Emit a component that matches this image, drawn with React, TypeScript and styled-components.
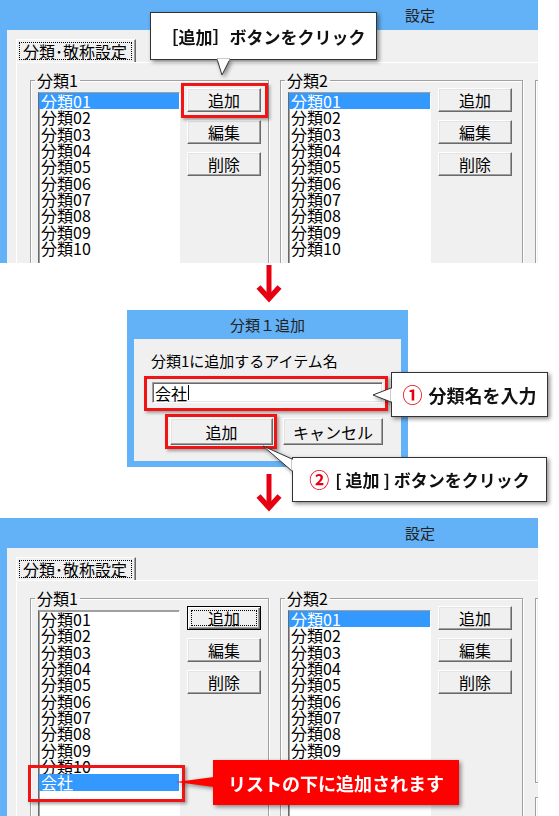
import React from 'react';
import styled, { createGlobalStyle, css } from 'styled-components';

const GlobalStyle = createGlobalStyle`
  html, body {
    margin: 0;
    padding: 0;
    background: #fff;
  }
  body {
    font-family: "Noto Sans CJK JP", "Liberation Sans", sans-serif;
    color: #000;
  }
`;

const Page = styled.div`
  width: 559px;
  height: 816px;
  overflow: hidden;
  display: flex;
  flex-direction: column;
`;

// ---- settings window ----

const Window = styled.div<{ $height: number }>`
  position: relative;
  flex-shrink: 0;
  width: 538px;
  height: ${p => p.$height}px;
  box-sizing: border-box;
  padding-left: 7px;
  background: #63b1f6;
  display: flex;
  flex-direction: column;
  overflow: hidden;
`;

const TitleBar = styled.div`
  height: 30px;
  line-height: 30px;
  padding-left: 398px;
  font-size: 15px;
  color: #222;
  flex-shrink: 0;
`;

const Client = styled.div`
  flex: 1;
  background: #f0f0f0;
  padding: 9px 0 0 9px;
  display: flex;
  flex-direction: column;
`;

const TabStrip = styled.div`
  display: flex;
  height: 23px;
  flex-shrink: 0;
`;

const Tab = styled.div`
  width: 120px;
  height: 23px;
  box-sizing: border-box;
  border-top: 1px solid #fff;
  border-left: 1px solid #fff;
  border-right: 1px solid #696969;
  box-shadow: inset -1px 0 0 #a0a0a0;
  padding: 2px 0 0 2px;
  display: flex;
  align-items: flex-start;
`;

const FocusText = styled.span`
  border: 1px dotted #000;
  padding: 0 4px 0 3px;
  font-size: 16px;
  line-height: 16px;
  white-space: nowrap;
`;

const TabPane = styled.div`
  flex: 1;
  border-top: 1px solid #fff;
  border-left: 1px solid #fff;
  padding: 9px 0 0 13px;
  display: flex;
  align-items: flex-start;
  gap: 11px;
`;

const Group = styled.fieldset<{ $width: number; $height?: number }>`
  flex-shrink: 0;
  margin: 0;
  padding: 0 0 0 7px;
  width: ${p => p.$width}px;
  height: ${p => p.$height ?? 320}px;
  box-sizing: border-box;
  border: 1px solid #a0a0a0;
  box-shadow: inset 1px 1px 0 #fff, 1px 1px 0 #fff;
  display: flex;
  align-items: flex-start;
  gap: 7px;
`;

const Legend = styled.legend`
  padding: 0 2px;
  margin-left: -3px;
  font-size: 16px;
  line-height: 16px;
`;

const SideColumn = styled.div`
  display: flex;
  flex-direction: column;
  gap: 14px;
  margin: 8px 0 0 1px;
`;

const ListBox = styled.div<{ $width: number }>`
  position: relative;
  width: ${p => p.$width}px;
  height: 300px;
  margin-top: 4px;
  box-sizing: border-box;
  background: #fff;
  border: 1px solid;
  border-color: #a0a0a0 #fff #fff #696969;
  box-shadow: inset 1px 1px 0 #a0a0a0;
`;

const ListItem = styled.div<{ $selected?: boolean }>`
  height: 16.33px;
  line-height: 16px;
  padding-left: 2px;
  font-size: 16px;
  white-space: nowrap;
  ${p => p.$selected && css`
    background: #3399ff;
    color: #fff;
  `}
`;

const ButtonColumn = styled.div`
  display: flex;
  flex-direction: column;
  gap: 8px;
`;

const Button = styled.button<{ $width?: number; $height?: number; $default?: boolean }>`
  width: ${p => p.$width ?? 74}px;
  height: ${p => p.$height ?? 24}px;
  box-sizing: border-box;
  margin: 0;
  padding: 0;
  font-family: inherit;
  font-size: 16px;
  color: #000;
  background: #f0f0f0;
  border: 1px solid;
  border-color: #fff #696969 #696969 #fff;
  box-shadow: inset -1px -1px 0 #a0a0a0, inset 1px 1px 0 #e3e3e3;
  display: flex;
  align-items: center;
  justify-content: center;
  ${p => p.$default && css`
    border-color: #000;
    box-shadow: inset 1px 1px 0 #fff, inset -1px -1px 0 #696969, inset -2px -2px 0 #a0a0a0;
  `}
`;

const ButtonFocus = styled.span`
  width: calc(100% - 8px);
  height: calc(100% - 8px);
  border: 1px dotted #000;
  display: flex;
  align-items: center;
  justify-content: center;
  line-height: 16px;
`;

// red frame drawn round whatever it wraps
const Ring = styled.div<{ $inset: string; $mt?: number; $ml?: number }>`
  position: relative;
  display: flex;
  flex-direction: column;
  margin-top: ${p => p.$mt ?? 0}px;
  margin-left: ${p => p.$ml ?? 0}px;
  &::after {
    content: '';
    position: absolute;
    inset: ${p => p.$inset};
    border: 3px solid #f01414;
    box-shadow: 2px 2px 3px rgba(0, 0, 0, 0.35);
    pointer-events: none;
    z-index: 2;
  }
`;

// ---- callouts ----

const Bubble = styled.div<{ $left: number; $top: number; $width: number; $height: number; $red?: boolean; $size?: number }>`
  position: absolute;
  left: ${p => p.$left}px;
  top: ${p => p.$top}px;
  width: ${p => p.$width}px;
  height: ${p => p.$height}px;
  box-sizing: border-box;
  z-index: 5;
  display: flex;
  align-items: center;
  justify-content: center;
  gap: 6px;
  font-size: ${p => p.$size ?? 18}px;
  font-weight: 700;
  white-space: nowrap;
  background: ${p => (p.$red ? '#ff0000' : '#fff')};
  color: ${p => (p.$red ? '#fff' : '#111')};
  border: ${p => (p.$red ? 'none' : '1px solid #333')};
  filter: drop-shadow(2px 2px 2px rgba(0, 0, 0, 0.45));
`;

const Tail = styled.svg`
  position: absolute;
  left: 0;
  top: 0;
  width: 1px;
  height: 1px;
  overflow: visible;
`;

const Num = styled.span`
  color: #e60012;
  font-size: 20px;
`;

function WhiteTail({ points, base }: { points: string; base: [number, number, number, number] }) {
  return (
    <Tail>
      <polygon points={points} fill="#fff" stroke="#333" strokeWidth={1} />
      <line x1={base[0]} y1={base[1]} x2={base[2]} y2={base[3]} stroke="#fff" strokeWidth={2} />
    </Tail>
  );
}

// ---- arrows & dialog ----

const ArrowRow = styled.div<{ $height: number; $pad: number }>`
  flex-shrink: 0;
  height: ${p => p.$height}px;
  box-sizing: border-box;
  padding: ${p => p.$pad}px 0 0 256px;
`;

function DownArrow() {
  return (
    <svg width="26" height="38" viewBox="0 0 26 38">
      <path d="M13 0 V33" stroke="#e60012" strokeWidth="5" fill="none" />
      <path d="M2.5 22 L13 33.5 L23.5 22" stroke="#e60012" strokeWidth="5.5" fill="none" />
    </svg>
  );
}

const DialogRow = styled.div`
  position: relative;
  flex-shrink: 0;
  height: 157px;
  padding-left: 127px;
  z-index: 3;
`;

const Dialog = styled.div`
  width: 281px;
  height: 157px;
  box-sizing: border-box;
  padding: 0 7px 6px;
  background: #63b1f6;
  display: flex;
  flex-direction: column;
`;

const DialogTitle = styled.div`
  height: 29px;
  line-height: 29px;
  text-align: center;
  font-size: 15px;
  color: #222;
`;

const DialogBody = styled.div`
  flex: 1;
  background: #f0f0f0;
  padding: 14px 0 0 17px;
  display: flex;
  flex-direction: column;
  align-items: flex-start;
`;

const FieldLabel = styled.div`
  font-size: 15px;
  line-height: 16px;
`;

const TextBox = styled.div`
  width: 231px;
  height: 21px;
  box-sizing: border-box;
  background: #fff;
  border: 1px solid;
  border-color: #a0a0a0 #fff #fff #a0a0a0;
  box-shadow: inset 1px 1px 0 #696969, inset -1px -1px 0 #e3e3e3;
  padding-left: 2px;
  display: flex;
  align-items: center;
  font-size: 16px;
  line-height: 16px;
`;

const Caret = styled.span`
  width: 0;
  height: 15px;
  border-left: 1px solid #000;
  margin-left: 1px;
`;

const DialogButtons = styled.div`
  display: flex;
  gap: 10px;
  margin: 15px 0 0 19px;
`;

const categories = Array.from({ length: 10 }, (_, i) => `分類${String(i + 1).padStart(2, '0')}`);

function SettingsWindow({ height, after, children }: { height: number; after?: boolean; children?: React.ReactNode }) {
  return (
    <Window $height={height}>
      <TitleBar>設定</TitleBar>
      <Client>
        <TabStrip>
          <Tab>
            <FocusText>分類･敬称設定</FocusText>
          </Tab>
        </TabStrip>
        <TabPane>
          <Group $width={239}>
            <Legend>分類1</Legend>
            <ListBox $width={142}>
              {categories.map((c, i) => (
                <ListItem key={c} $selected={!after && i === 0}>{c}</ListItem>
              ))}
              {after && (
                <Ring $inset="-9px -6px -11px -11px">
                  <ListItem $selected>会社</ListItem>
                </Ring>
              )}
            </ListBox>
            <ButtonColumn>
              {after ? (
                <Button $default><ButtonFocus>追加</ButtonFocus></Button>
              ) : (
                <Ring $inset="-5px -7px -6px -6px">
                  <Button>追加</Button>
                </Ring>
              )}
              <Button>編集</Button>
              <Button>削除</Button>
            </ButtonColumn>
          </Group>
          <Group $width={243}>
            <Legend>分類2</Legend>
            <ListBox $width={143}>
              {categories.map((c, i) => (
                <ListItem key={c} $selected={i === 0}>{c}</ListItem>
              ))}
            </ListBox>
            <ButtonColumn>
              <Button>追加</Button>
              <Button>編集</Button>
              <Button>削除</Button>
            </ButtonColumn>
          </Group>
          <SideColumn>
            <Group $width={100} $height={185} />
            <Group $width={100} $height={100} />
          </SideColumn>
        </TabPane>
      </Client>
      {children}
    </Window>
  );
}

export default function App() {
  return (
    <>
      <GlobalStyle />
      <Page>
        <SettingsWindow height={263}>
          <Bubble $left={150} $top={12} $width={227} $height={48} $size={17}>
            ［追加］ボタンをクリック
            <WhiteTail points="66,46 71,62 79,46" base={[66.5, 46.5, 78.5, 46.5]} />
          </Bubble>
        </SettingsWindow>

        <ArrowRow $height={47} $pad={2}>
          <DownArrow />
        </ArrowRow>

        <DialogRow>
          <Dialog>
            <DialogTitle>分類１追加</DialogTitle>
            <DialogBody>
              <FieldLabel>分類1に追加するアイテム名</FieldLabel>
              <Ring $inset="-6px -5px -8px -8px" $mt={13} $ml={1}>
                <TextBox>
                  会社<Caret />
                </TextBox>
              </Ring>
              <DialogButtons>
                <Ring $inset="-4px -4px -4px -5px">
                  <Button $width={103} $height={27}>追加</Button>
                </Ring>
                <Button $width={100} $height={27}>キャンセル</Button>
              </DialogButtons>
            </DialogBody>
          </Dialog>
          <Bubble $left={391} $top={62} $width={157} $height={45}>
            <Num>①</Num>分類名を入力
            <WhiteTail points="-1,15 -19,22 -1,29" base={[-0.5, 15.5, -0.5, 28.5]} />
          </Bubble>
          <Bubble $left={292} $top={147} $width={255} $height={45} $size={17}>
            <Num>②</Num>[ 追加 ] ボタンをクリック
            <WhiteTail points="-1,1 -30,-12 -1,13" base={[-0.5, 1.5, -0.5, 12.5]} />
          </Bubble>
        </DialogRow>

        <ArrowRow $height={51} $pad={7}>
          <DownArrow />
        </ArrowRow>

        <SettingsWindow height={298} after>
          <Bubble $left={213} $top={242} $width={246} $height={45} $red>
            リストの下に追加されます
            <Tail>
              <polygon points="1,17 -37,22 1,27" fill="#ff0000" />
            </Tail>
          </Bubble>
        </SettingsWindow>
      </Page>
    </>
  );
}
